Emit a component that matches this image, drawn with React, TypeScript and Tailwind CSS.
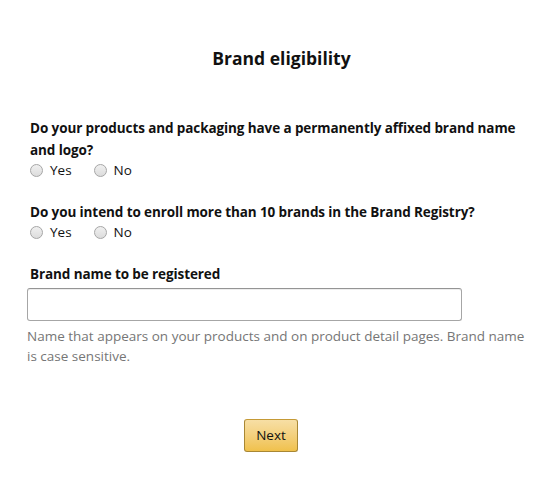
export default function App() {
  const Radio = ({ label }: { label: string }) => (
    <label className="flex items-center gap-[7px]">
      <span className="w-[13px] h-[13px] rounded-full border border-[#a6a6a6] bg-gradient-to-b from-[#f0f0f0] to-[#dcdcdc]" />
      <span>{label}</span>
    </label>
  );

  return (
    <div
      className="w-[557px] h-[500px] bg-white text-[#111] text-[13.5px]"
      style={{ fontFamily: '"Open Sans", "Noto Sans", sans-serif' }}
    >
      <h1 className="pt-[45px] pl-[6px] text-center text-[17.5px] font-bold leading-[26px]">Brand eligibility</h1>

      <div className="pl-[30px] pr-[15px] pt-[46px]">
        <p className="max-w-[495px] font-bold leading-[22px] tracking-[-0.1px]">
          Do your products and packaging have a permanently affixed brand name and logo?
        </p>
        <div className="-mt-[1px] flex gap-[22px] leading-[20px]">
          <Radio label="Yes" />
          <Radio label="No" />
        </div>

        <p className="mt-[21px] font-bold leading-[22px] tracking-[-0.1px]">
          Do you intend to enroll more than 10 brands in the Brand Registry?
        </p>
        <div className="-mt-[1px] flex gap-[22px] leading-[20px]">
          <Radio label="Yes" />
          <Radio label="No" />
        </div>

        <p className="mt-[21px] font-bold leading-[22px] tracking-[-0.1px]">Brand name to be registered</p>
        <input
          type="text"
          className="mt-[3px] -ml-[3px] block w-[435px] h-[33px] rounded-[3px] border border-[#a6a6a6] border-t-[#949494] shadow-[inset_0_1px_0_rgba(0,0,0,0.07)] outline-none px-2"
        />
        <p className="mt-[5px] -ml-[3px] max-w-[505px] text-[#767676] leading-[20px]">
          Name that appears on your products and on product detail pages. Brand name is case sensitive.
        </p>

        <div className="flex justify-center mt-[53px] pr-[30px]">
          <button className="w-[54px] h-[33px] rounded-[3px] border border-[#a88734] border-t-[#c59a36] bg-gradient-to-b from-[#f7dfa5] to-[#f0c14b] text-[#111] text-[13.5px]">
            Next
          </button>
        </div>
      </div>
    </div>
  );
}
